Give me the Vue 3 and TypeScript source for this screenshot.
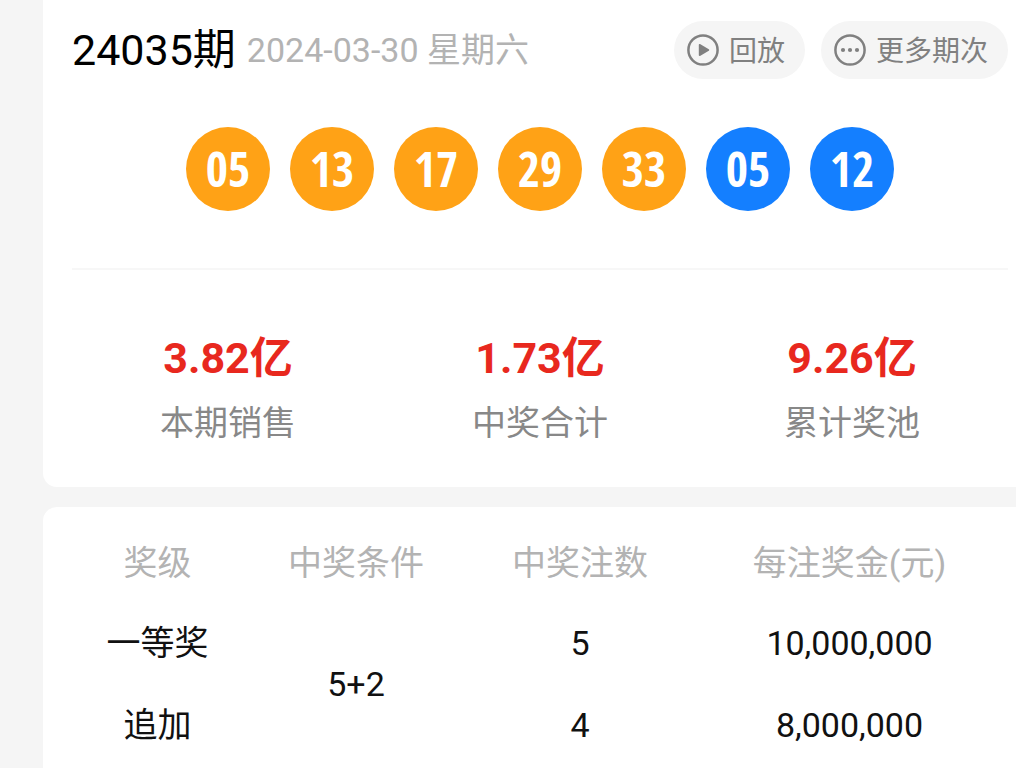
<script setup lang="ts">
interface Ball {
  value: string
  zone: 'front' | 'back'
}

interface Stat {
  value: string
  label: string
}

const issue = '24035期'
const drawDate = '2024-03-30'
const weekday = '星期六'

const balls: Ball[] = [
  { value: '05', zone: 'front' },
  { value: '13', zone: 'front' },
  { value: '17', zone: 'front' },
  { value: '29', zone: 'front' },
  { value: '33', zone: 'front' },
  { value: '05', zone: 'back' },
  { value: '12', zone: 'back' },
]

const stats: Stat[] = [
  { value: '3.82亿', label: '本期销售' },
  { value: '1.73亿', label: '中奖合计' },
  { value: '9.26亿', label: '累计奖池' },
]
</script>

<template>
  <main class="page">
    <section class="card draw">
      <header class="head">
        <h1 class="issue">{{ issue }}</h1>
        <time class="date" datetime="2024-03-30">{{ drawDate }} {{ weekday }}</time>
        <div class="actions">
          <button type="button" class="pill">
            <svg class="icon" viewBox="0 0 32 32" aria-hidden="true">
              <circle cx="16" cy="16" r="14.6" fill="none" stroke="currentColor" stroke-width="2.5" />
              <path d="M12.6 10.8 L21.4 16 L12.6 21.2 Z" fill="currentColor" stroke="currentColor" stroke-width="1.6" stroke-linejoin="round" />
            </svg>
            <span class="pill-text">回放</span>
          </button>
          <button type="button" class="pill">
            <svg class="icon" viewBox="0 0 32 32" aria-hidden="true">
              <circle cx="16" cy="16" r="14.6" fill="none" stroke="currentColor" stroke-width="2.5" />
              <circle cx="9" cy="16" r="2.1" fill="currentColor" />
              <circle cx="16" cy="16" r="2.1" fill="currentColor" />
              <circle cx="23" cy="16" r="2.1" fill="currentColor" />
            </svg>
            <span class="pill-text">更多期次</span>
          </button>
        </div>
      </header>

      <ul class="balls">
        <li v-for="(ball, i) in balls" :key="i" class="ball" :class="ball.zone">{{ ball.value }}</li>
      </ul>

      <dl class="stats">
        <div v-for="stat in stats" :key="stat.label" class="stat">
          <dt class="label">{{ stat.label }}</dt>
          <dd class="value">{{ stat.value }}</dd>
        </div>
      </dl>
    </section>

    <section class="card prizes">
      <table class="table">
        <colgroup>
          <col class="c-level" />
          <col class="c-rule" />
          <col class="c-count" />
          <col class="c-amount" />
        </colgroup>
        <thead>
          <tr>
            <th scope="col">奖级</th>
            <th scope="col">中奖条件</th>
            <th scope="col">中奖注数</th>
            <th scope="col">每注奖金(元)</th>
          </tr>
        </thead>
        <tbody>
          <tr>
            <td>一等奖</td>
            <td rowspan="2">5+2</td>
            <td>5</td>
            <td>10,000,000</td>
          </tr>
          <tr>
            <td>追加</td>
            <td>4</td>
            <td>8,000,000</td>
          </tr>
        </tbody>
      </table>
    </section>
  </main>
</template>

<style>
body {
  background: #f5f5f5;
}
</style>

<style scoped>
.page {
  box-sizing: border-box;
  min-height: 100vh;
  display: flex;
  flex-direction: column;
  gap: 20px;
  padding-left: 43px;
  background: #f5f5f5;
  color: #111;
  font-family: Roboto, "Noto Sans CJK SC", sans-serif;
  font-size: 34px;
}

.card {
  background: #fff;
  padding: 0 8px 0 29px;
}

.draw {
  border-radius: 0 0 0 14px;
  padding-bottom: 34px;
}

.prizes {
  flex: 1;
  border-radius: 14px 0 0 0;
  padding-top: 17px;
}

.head {
  display: flex;
  align-items: center;
  gap: 11px;
  height: 100px;
}

.issue {
  margin: 0;
  font-size: 43px;
  font-weight: 400;
  line-height: 62px;
  color: #000;
  white-space: nowrap;
}

.date {
  line-height: 60px;
  color: #b3b3b3;
  white-space: nowrap;
}

.actions {
  display: flex;
  gap: 16px;
  margin-left: auto;
}

.pill {
  display: flex;
  align-items: center;
  gap: 10px;
  height: 58px;
  padding: 0 20px 0 13px;
  border: 0;
  border-radius: 29px;
  background: #f5f5f5;
  color: #808080;
  font: inherit;
  font-size: 28px;
  line-height: 40px;
  white-space: nowrap;
  cursor: pointer;
}

.pill-text {
  padding-top: 4px;
}

.icon {
  width: 32px;
  height: 32px;
}

.balls {
  display: flex;
  justify-content: center;
  gap: 20px;
  margin: 0;
  padding: 27px 0 57px;
  list-style: none;
  border-bottom: 2px solid #f7f7f7;
}

.ball {
  display: flex;
  align-items: center;
  justify-content: center;
  width: 84px;
  height: 84px;
  border-radius: 50%;
  color: #fff;
  font-family: "Open Sans Condensed", "Roboto Condensed", Roboto, sans-serif;
  font-size: 48px;
  font-weight: 700;
  line-height: 84px;
}

.front {
  background: #ffa216;
}

.back {
  background: #147fff;
}

.stats {
  display: grid;
  grid-template-columns: repeat(3, 1fr);
  margin: 0;
  padding-top: 57px;
}

.stat {
  display: flex;
  flex-direction: column-reverse;
  align-items: center;
  gap: 4px;
}

.label {
  line-height: 60px;
  color: #888;
}

.value {
  margin: 0;
  font-size: 43px;
  font-weight: 700;
  line-height: 62px;
  color: #e8281e;
}

.table {
  width: 100%;
  table-layout: fixed;
  border-collapse: collapse;
  text-align: center;
}

.c-level {
  width: 171px;
}

.c-rule {
  width: 226px;
}

.c-count {
  width: 222px;
}

.c-amount {
  width: 317px;
}

th {
  height: 78px;
  padding: 0;
  font-weight: 400;
  line-height: 50px;
  color: #b3b3b3;
}

td {
  height: 82px;
  padding: 0;
  line-height: 50px;
}
</style>
